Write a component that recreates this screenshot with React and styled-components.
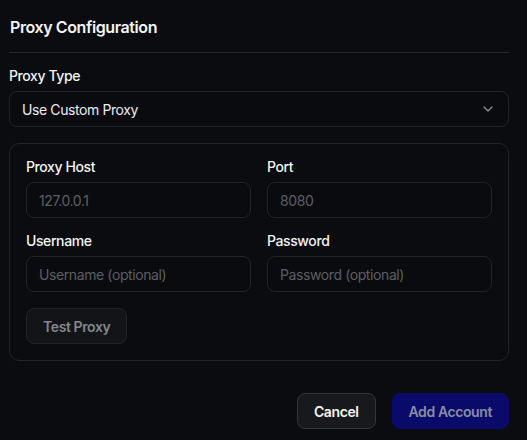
import React from 'react'
import styled, { createGlobalStyle } from 'styled-components'
import { ChevronDown } from 'lucide-react'

const GlobalStyle = createGlobalStyle`
  html, body {
    margin: 0;
    padding: 0;
    background: #0b0c0f;
    font-family: Inter, "Noto Sans", sans-serif;
    color: #f4f4f5;
    letter-spacing: -0.025em;
  }
  * { box-sizing: border-box; }
`

const Panel = styled.div`
  width: 500px;
  margin-left: 9px;
  display: flex;
  flex-direction: column;
`

const Header = styled.div`
  padding: 15px 0 13px 1px;
  border-bottom: 1px solid #25262b;
`

const Title = styled.h2`
  margin: 0;
  font-size: 16px;
  line-height: 24px;
  font-weight: 600;
`

const Body = styled.div`
  padding-top: 16px;
  display: flex;
  flex-direction: column;
  gap: 16px;
`

const Field = styled.div`
  display: flex;
  flex-direction: column;
  gap: 8px;
`

const Label = styled.label`
  font-size: 14px;
  line-height: 14px;
  font-weight: 500;
  color: #f4f4f5;
`

const Select = styled.div`
  height: 36px;
  border: 1px solid #222329;
  border-radius: 8px;
  background: #0a0b0e;
  display: flex;
  align-items: center;
  justify-content: space-between;
  padding: 0 12px;
  font-size: 14px;
  color: #ececee;
  svg { color: #8a8b90; }
`

const Card = styled.div`
  border: 1px solid #222329;
  border-radius: 10px;
  padding: 16px;
  display: flex;
  flex-direction: column;
  gap: 16px;
`

const Grid = styled.div`
  display: grid;
  grid-template-columns: 1fr 1fr;
  gap: 16px;
`

const Input = styled.input`
  height: 36px;
  width: 100%;
  border: 1px solid #222329;
  border-radius: 8px;
  background: #0a0b0e;
  padding: 0 12px;
  font-family: inherit;
  font-size: 14px;
  letter-spacing: inherit;
  color: #ececee;
  outline: none;
  &::placeholder { color: #5d5e64; }
`

const Button = styled.button`
  height: 36px;
  padding: 0 16px;
  border-radius: 8px;
  font-family: inherit;
  font-size: 14px;
  font-weight: 600;
  letter-spacing: inherit;
  border: 1px solid ${p => p.$border};
  background: ${p => p.$bg};
  color: ${p => p.$fg};
  cursor: pointer;
`

const Actions = styled.div`
  display: flex;
  justify-content: flex-end;
  gap: 16px;
  padding-top: 32px;
`

const TestRow = styled.div`
  display: flex;
`

export default function App() {
  return (
    <>
      <GlobalStyle />
      <Panel>
        <Header>
          <Title>Proxy Configuration</Title>
        </Header>
        <Body>
          <Field>
            <Label>Proxy Type</Label>
            <Select>
              <span>Use Custom Proxy</span>
              <ChevronDown size={16} strokeWidth={2} />
            </Select>
          </Field>
          <Card>
            <Grid>
              <Field>
                <Label>Proxy Host</Label>
                <Input placeholder="127.0.0.1" />
              </Field>
              <Field>
                <Label>Port</Label>
                <Input placeholder="8080" />
              </Field>
              <Field>
                <Label>Username</Label>
                <Input placeholder="Username (optional)" />
              </Field>
              <Field>
                <Label>Password</Label>
                <Input placeholder="Password (optional)" />
              </Field>
            </Grid>
            <TestRow>
              <Button $bg="#131418" $border="#222329" $fg="#85868b">Test Proxy</Button>
            </TestRow>
          </Card>
        </Body>
        <Actions>
          <Button $bg="#18191d" $border="#34353a" $fg="#f4f4f5">Cancel</Button>
          <Button $bg="#0a0a6b" $border="#0a0a6b" $fg="#8b8ca3">Add Account</Button>
        </Actions>
      </Panel>
    </>
  )
}
